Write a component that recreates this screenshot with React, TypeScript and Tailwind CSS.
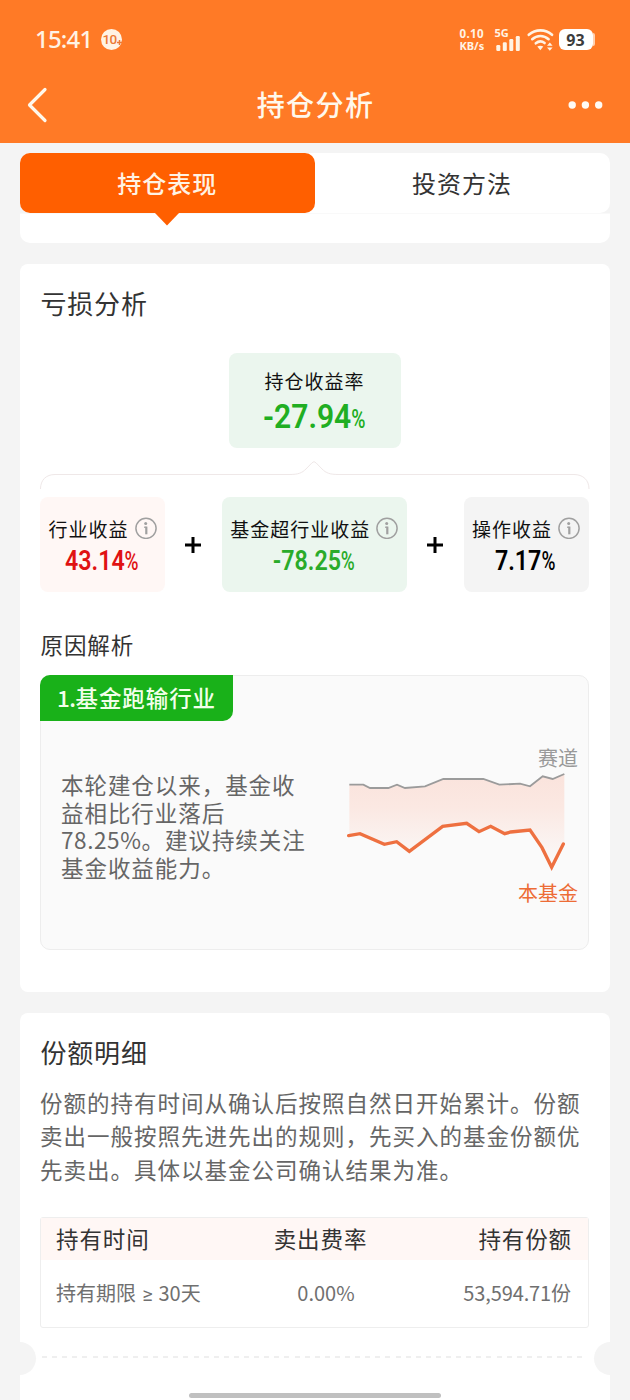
import type { ReactNode } from "react";
import { clsx } from "clsx";

const holdingTerms = [{ days: 30, fee: "0.00%", share: "53,594.71份" }];

function InfoIcon() {
  return (
    <svg className="h-[22px] w-[22px] shrink-0" viewBox="0 0 22 22" fill="none">
      <circle cx="11" cy="11.3" r="10.1" stroke="#a0a0a0" strokeWidth="1.5" />
      <circle cx="10.7" cy="6.5" r="1.5" fill="#a0a0a0" />
      <path d="M11.3 9.6V17.3" stroke="#a0a0a0" strokeWidth="2.2" />
      <path d="M9 10.2H11.5" stroke="#a0a0a0" strokeWidth="1.2" />
    </svg>
  );
}

function SignalIcon() {
  return (
    <svg className="h-[16px] w-[25px]" viewBox="0 0 25 16" fill="#fff3e4">
      <rect x="1.3" y="10" width="4" height="6" rx="1.2" />
      <rect x="7.8" y="7.3" width="4" height="8.7" rx="1.2" />
      <rect x="14.3" y="4" width="4" height="12" rx="1.2" />
      <rect x="20.8" y="1" width="4" height="15" rx="1.2" />
    </svg>
  );
}

function WifiIcon() {
  return (
    <svg className="-ml-px h-[22px] w-[27px]" viewBox="0 0 27 22" fill="none">
      <g stroke="#fff3e4" strokeWidth="2.6" strokeLinecap="round">
        <path d="M1.8 5.8C8.5 -0.1 18.5 -0.1 25 5.8" />
        <path d="M5.2 10.2C10 5.9 16.8 5.9 21.6 10.2" />
        <path d="M8.8 14.3C11.6 12 15 12 17.6 14" />
      </g>
      <path d="M10.3 17.6C12 16.5 14.7 16.5 16.3 17.6L13.3 21.3Z" fill="#fff3e4" />
      <path d="M20 16.8L22.8 13.4L25.6 16.8ZM20 18.4L22.8 21.8L25.6 18.4Z" fill="#fff3e4" />
    </svg>
  );
}

function StatusBar() {
  return (
    <div className="flex h-[79px] items-center justify-between pr-[35px] pl-[35px] text-[#fff3e4]">
      <div className="flex items-center gap-[9px]">
        <span className="pb-px font-['Noto_Sans'] text-[24px] leading-none font-medium tracking-[-0.8px]">15:41</span>
        <span className="flex h-[21px] w-[21px] items-center justify-center rounded-full bg-[#fff3e4] font-['Roboto'] text-[13.5px] leading-none font-medium tracking-[-0.6px] text-[#ec7a35]">
          10
          <svg className="mt-[6px] h-[5px] w-[5px] shrink-0" viewBox="0 0 5 5">
            <path d="M2.5 0V5M0 2.5H5" stroke="currentColor" strokeWidth="1.5" />
          </svg>
        </span>
      </div>
      <div className="flex items-center">
        <div className="w-[35px] font-['Noto_Sans'] text-[11.5px] leading-[12px] font-bold">
          <div className="tracking-[0.4px]">0.10</div>
          <div className="text-[11px]">KB/s</div>
        </div>
        <div className="flex w-[33px] flex-col">
          <span className="h-[7px] font-['Noto_Sans'] text-[11px] leading-[9px] font-bold">5G</span>
          <SignalIcon />
        </div>
        <WifiIcon />
        <div className="ml-[5px] flex items-center">
          <span className="flex h-[21px] w-[34px] items-center justify-center rounded-[6px] bg-white font-['Noto_Sans'] text-[16px] leading-none font-bold text-[#3c3c3c]">
            93
          </span>
          <span className="h-[13px] w-[2.5px] rounded-r-full bg-[#ffd0b0]" />
        </div>
      </div>
    </div>
  );
}

function TitleBar() {
  return (
    <div className="flex h-[52px] items-center justify-between pr-[27px] pl-[27px] text-[#fff8ec]">
      <svg className="h-[36px] w-[36px]" viewBox="0 0 36 36" fill="none">
        <path d="M18 2.5L2.5 18L18 33.5" stroke="currentColor" strokeWidth="3.2" strokeLinecap="round" strokeLinejoin="round" />
      </svg>
      <h1 className="pb-[2px] pl-px text-[28px] leading-none font-medium tracking-[1.4px]">持仓分析</h1>
      <svg className="h-[8px] w-[36px]" viewBox="0 0 36 8" fill="#fffaf4">
        <circle cx="5.2" cy="4" r="3.7" />
        <circle cx="18.4" cy="4" r="3.7" />
        <circle cx="31.7" cy="4" r="3.7" />
      </svg>
    </div>
  );
}

function Tabs() {
  return (
    <div className="mx-5 mt-[10px] w-[589.5px]">
      <div className="flex h-[60px] rounded-[10px] bg-white text-[24px] leading-none tracking-[1px]">
        <div className="relative flex w-[294.5px] items-center justify-center rounded-[10px] bg-[#ff5f00] font-medium text-[#fff3e4]">
          持仓表现
          <svg className="absolute top-[60px] left-[135px] h-[13px] w-[24px]" viewBox="0 0 24 13">
            <path d="M0 0H24L12 12.5Z" fill="#ff5f00" />
          </svg>
        </div>
        <div className="flex flex-1 items-center justify-center text-[#333]">投资方法</div>
      </div>
      <div className="h-[30px] rounded-b-[10px] border-t border-[#f9f9f9] bg-white" />
    </div>
  );
}

function Rate({ value, className, percentClassName }: { value: string; className?: string; percentClassName?: string }) {
  return (
    <div className={clsx("flex items-baseline font-['Roboto'] leading-[32px] font-semibold", className)}>
      <span>{value}</span>
      <span className={clsx("origin-left scale-x-[0.85] font-medium", percentClassName)}>%</span>
    </div>
  );
}

interface YieldCardProps {
  label: string;
  value: string;
  className?: string;
  valueClassName?: string;
}

function YieldCard({ label, value, className, valueClassName }: YieldCardProps) {
  return (
    <div className={clsx("flex h-[95px] flex-col items-center rounded-[8px] pt-[20px]", className)}>
      <div className="flex h-[22px] items-center gap-[6px] text-[19px] leading-none tracking-[1px] whitespace-nowrap text-[#111]">
        <span>{label}</span>
        <InfoIcon />
      </div>
      <Rate
        value={value}
        className={clsx("mt-[6px] h-[32px] scale-x-[0.86] pl-[2px] text-[27px]", valueClassName)}
        percentClassName="text-[26px]"
      />
    </div>
  );
}

function Plus() {
  return (
    <svg className="h-[16px] w-[16px]" viewBox="0 0 16 16">
      <path d="M8 0V16M0 8H16" stroke="#000" strokeWidth="3" />
    </svg>
  );
}

function TrendChart() {
  return (
    <div className="flex w-[233px] flex-col items-end text-[20px] leading-none">
      <span className="text-[#999]">赛道</span>
      <svg className="mt-[2px] mr-[9px] h-[102px] w-[224px]" viewBox="75 330 672 306" fill="none">
        <defs>
          <linearGradient id="gap" x1="0" y1="342" x2="0" y2="622" gradientUnits="userSpaceOnUse">
            <stop offset="0" stopColor="#fae3dc" />
            <stop offset="0.35" stopColor="#fbe8e2" />
            <stop offset="1" stopColor="#fafafa" />
          </linearGradient>
        </defs>
        <path
          d="M88 374H130L150 384H205L231 374L255 384L315 379L370 357H490L538 374L600 371L630 379L668 349L698 357L733 342V552L695 622L666 563L630 510L572 516L554 521L512 499L477 515L440 490L368 499L268 574L230 545L193 553L120 521L88 527Z"
          fill="url(#gap)"
        />
        <path
          d="M88 374H130L150 384H205L231 374L255 384L315 379L370 357H490L538 374L600 371L630 379L668 349L698 357L733 342"
          stroke="#9b9b9b"
          strokeWidth="5.5"
        />
        <path
          d="M86 527L120 521L193 553L230 545L268 574L368 499L440 490L477 515L512 499L554 521L572 516L630 510L666 563L695 622L730 552"
          stroke="#ee7040"
          strokeWidth="10"
          strokeLinecap="round"
        />
      </svg>
      <span className="mt-[11px] text-[#ed6c36]">本基金</span>
    </div>
  );
}

function SectionTitle({ children }: { children: ReactNode }) {
  return <h2 className="pl-[0.5px] text-[26px] leading-[32px] tracking-[0.8px] text-[#333]">{children}</h2>;
}

function LossAnalysis() {
  return (
    <section className="mx-5 mt-[21px] h-[728px] w-[589.5px] rounded-[8px] bg-white px-5 pt-[23px]">
      <SectionTitle>亏损分析</SectionTitle>

      <div className="mt-[34px] ml-[188.5px] flex h-[95px] w-[172px] flex-col items-center rounded-[8px] bg-[#ebf6ee] pt-[17px]">
        <span className="text-[19px] leading-[22px] tracking-[1px] text-[#111]">持仓收益率</span>
        <Rate
          value="-27.94"
          className="mt-[9px] h-[32px] scale-x-[0.91] pl-[3px] text-[33px] text-[#20ae22]"
          percentClassName="text-[25px]"
        />
      </div>

      <svg className="mt-[12px] h-[30px] w-[550px]" viewBox="0 0 550 30" fill="none">
        <path
          d="M0.5 29C0.5 20 6 14.5 15 14.5H250C258 14.5 262 13 266 9L272 2.8Q274 0.5 276 2.8L282 9C286 13 290 14.5 298 14.5H534C543 14.5 549 20 549 29"
          stroke="#efe8e8"
        />
      </svg>

      <div className="mt-[7px] flex w-[548.5px] items-center justify-between">
        <YieldCard label="行业收益" value="43.14" className="w-[125px] bg-[#fff7f5]" valueClassName="text-[#e01212]" />
        <Plus />
        <YieldCard label="基金超行业收益" value="-78.25" className="w-[185px] bg-[#ebf6ee]" valueClassName="text-[#2aab2a]" />
        <Plus />
        <YieldCard label="操作收益" value="7.17" className="w-[125px] bg-[#f4f4f4]" valueClassName="text-black" />
      </div>

      <h3 className="mt-[38px] pl-[0.5px] text-[22.5px] leading-[28px] tracking-[0.9px] text-[#333]">原因解析</h3>

      <div className="mt-[17px] h-[275px] w-[549px] rounded-[10px] border border-[#ededed] bg-[#fafafa]">
        <div className="-mt-px -ml-px flex h-[46px] w-[193px] items-center rounded-tl-[10px] rounded-br-[10px] bg-[#19b119] pb-px pl-[17px] text-[22.5px] leading-none font-medium tracking-[0.9px] whitespace-nowrap text-[#f2ffea]">
          <span className="tracking-[-0.5px]">1.</span>基金跑输行业
        </div>
        <div className="flex justify-between pr-[10px] pl-[20px]">
          <p className="mt-[50px] w-[250px] text-[22.5px] leading-[27.6px] tracking-[0.95px] text-[#666]">
            本轮建仓以来，基金收
            <br />
            益相比行业落后
            <br />
            <span className="tracking-[0.6px]">78.25%</span>。建议持续关注
            <br />
            基金收益能力。
          </p>
          <div className="mt-[27px]">
            <TrendChart />
          </div>
        </div>
      </div>
    </section>
  );
}

function ShareDetail() {
  return (
    <section className="relative mx-5 mt-[21px] h-[400px] w-[589.5px] rounded-t-[8px] bg-white px-5 pt-[23px]">
      <SectionTitle>份额明细</SectionTitle>
      <p className="mt-[18px] text-[22.5px] leading-[33.4px] tracking-[1px] whitespace-nowrap text-[#666]">
        份额的持有时间从确认后按照自然日开始累计。份额
        <br />
        卖出一般按照先进先出的规则，先买入的基金份额优
        <br />
        先卖出。具体以基金公司确认结果为准。
      </p>

      <div className="mt-[31px] h-[111px] w-[549px] rounded-[3px] border border-[#eee]">
        <div className="grid h-[42px] grid-cols-3 items-center bg-[#fff7f5] pr-[16px] pb-[2px] pl-[15px] text-[22.5px] leading-none tracking-[0.9px] text-[#333]">
          <span>持有时间</span>
          <span className="pl-[13px] text-center">卖出费率</span>
          <span className="text-right">持有份额</span>
        </div>
        {holdingTerms.map((row) => (
          <div
            key={row.days}
            className="grid h-[67px] grid-cols-3 items-center pr-[17px] pb-px pl-[15px] text-[20px] leading-none text-[#707070]"
          >
            <span className="whitespace-nowrap">
              持有期限 <span className="mr-px ml-[2px] font-['Roboto'] text-[20px]">≥</span> {row.days}天
            </span>
            <span className="pl-[25px] text-center">{row.fee}</span>
            <span className="text-right tracking-[-0.1px]">{row.share}</span>
          </div>
        ))}
      </div>

      {/* Ticket-style tear line */}
      <div className="mt-[28px] ml-[2px] h-[2px] w-[540px] bg-[repeating-linear-gradient(90deg,#efefef_0px,#efefef_5px,transparent_5px,transparent_10.1px)]" />
      <span className="absolute top-[329px] -left-[17px] h-[33px] w-[33px] rounded-full bg-[#f4f4f4]" />
      <span className="absolute top-[329px] -right-[17px] h-[33px] w-[33px] rounded-full bg-[#f4f4f4]" />
    </section>
  );
}

export default function App() {
  return (
    <div className="relative h-[1400px] w-[630px] overflow-hidden bg-[#f4f4f4] font-['Noto_Sans_CJK_SC',sans-serif]">
      <header className="h-[143px] bg-[#ff7a26]">
        <StatusBar />
        <TitleBar />
      </header>
      <Tabs />
      <LossAnalysis />
      <ShareDetail />
      <div className="absolute bottom-[2px] left-[189px] h-[5px] w-[252px] rounded-full bg-[#c0c0c0]" />
    </div>
  );
}
